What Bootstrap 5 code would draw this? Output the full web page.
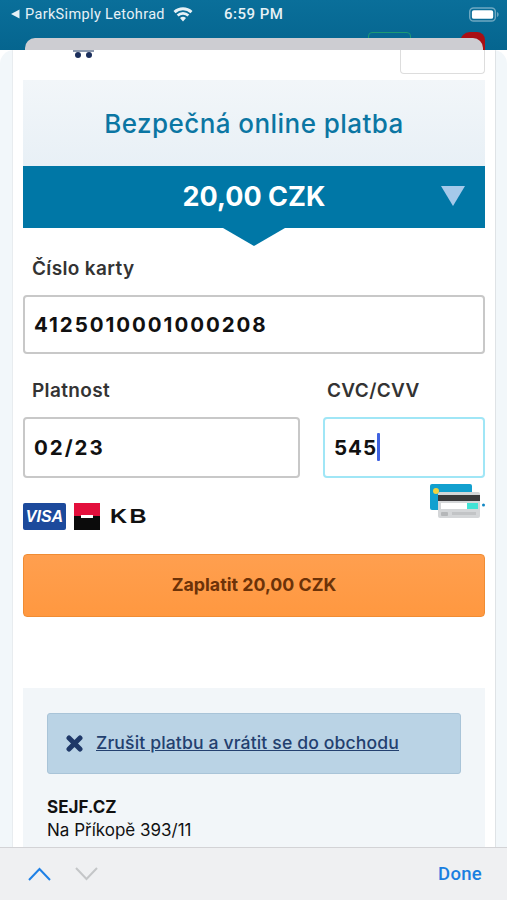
<!DOCTYPE html>
<html lang="cs">

<head>
  <meta charset="UTF-8">
  <meta name="viewport" content="width=device-width, initial-scale=1.0">
  <title>Bezpečná online platba</title>
  <link href="https://cdn.jsdelivr.net/npm/bootstrap@5.3.0/dist/css/bootstrap.min.css" rel="stylesheet">
  <style>
    html, body { height: 900px; overflow: hidden; }
    body { font-family: Inter, "Liberation Sans", sans-serif; background: #fff; color: #333; }

    .top-bar { height: 50px; background: linear-gradient(#0a6f9a, #05658f); position: relative; color: #e6f1f6; }
    .status-row { height: 28px; padding: 0 8px 0 10px; font: 400 14.5px Roboto, sans-serif; }
    .status-carrier { width: 214px; letter-spacing: .35px; }
    .status-time { font-size: 15px; font-weight: 500; letter-spacing: .5px; }
    .peek-green { position: absolute; left: 368px; top: 32px; width: 43px; height: 10px; border: 1px solid #1c9a74; border-radius: 4px 4px 0 0; }
    .peek-red { position: absolute; left: 460px; top: 32px; width: 25px; height: 18px; background: #a90f14; border-radius: 10px 8px 0 0; }
    .peek-sheet { position: absolute; left: 25px; right: 24px; top: 38px; height: 12px; background: #cdcdd2; border-radius: 10px 10px 0 0; }

    .page-sheet { flex: 1 1 0; min-height: 0; background: #f2f7fa; border-radius: 14px 14px 0 0; overflow: hidden; position: relative; padding: 0 11px 0 12px; }
    .page-inner { height: 100%; background: #fff; border-right: 1px solid #dfe3e6; border-left: 1px solid #e8ecef; padding: 30px 10px 0; position: relative; }
    .cart-bar { position: absolute; left: 60px; top: 0; width: 21px; height: 2px; background: #8b98ad; }
    .cart-wheel { position: absolute; top: 2px; width: 6px; height: 6px; border-radius: 50%; background: #1b2f5c; }
    .corner-box { position: absolute; left: 387px; top: 0; width: 85px; height: 24px; background: #fff; border: 1px solid #ddd; border-top: 0; border-radius: 0 0 4px 4px; }

    .pay-head { height: 86px; background: linear-gradient(#f2f6f9, #e8f0f6); color: #0b76a3; font-size: 26px; font-weight: 500; letter-spacing: .45px; }
    .pay-amount { height: 62px; background: #0077a6; color: #fff; font-size: 27px; font-weight: 700; position: relative; }
    .amount-toggle { position: absolute; left: 418px; top: 20px; width: 0; height: 0; border-left: 12px solid transparent; border-right: 12px solid transparent; border-top: 20px solid #a4c9ea; }
    .amount-notch { width: 0; height: 0; margin: 0 auto; border-left: 31px solid transparent; border-right: 31px solid transparent; border-top: 18px solid #0077a6; }

    .field-label { font-size: 19px; font-weight: 600; color: #333; margin: 0; padding-left: 9px; line-height: 24px; letter-spacing: .35px; }
    .field-input { height: 59px; border: 2px solid #c8c8c8; border-radius: 4px; padding: 0 9px; font-size: 20.5px; font-weight: 700; color: #111; letter-spacing: 1.95px; }
    .field-input:focus { border-color: #c8c8c8; box-shadow: none; }
    .field-cyan, .field-cyan:focus { border-color: #a0e6f6; }
    .field-wrap { position: relative; }
    .caret-mark { position: absolute; left: 54px; top: 16px; width: 3px; height: 28px; background: #3f62e0; border-radius: 1px; }
    .w-expiry { width: 277px; }
    .w-cvc { width: 162px; }

    .logo-visa { width: 43px; height: 27px; background: #1c4a9c; color: #fff; border-radius: 2px; font: italic 700 16px "Liberation Sans", sans-serif; }
    .logo-kb-mark { width: 26px; height: 27px; background: linear-gradient(#e30f3c 50%, #0b0b0b 50%); position: relative; }
    .logo-kb-mark::after { content: ""; position: absolute; left: 7px; right: 7px; top: 12px; height: 3px; background: #fff; }
    .logo-kb-text { font: 700 20px "Liberation Sans", sans-serif; letter-spacing: 2px; color: #111; transform: scaleX(1.18); transform-origin: left; }
    .card-icon { position: absolute; left: 417px; top: 434px; }

    .pay-btn { height: 63px; background: linear-gradient(#ff9f4f, #ff9840); border: 1px solid #f08c33; border-radius: 4px; color: #6c3208; font-size: 17.8px; font-weight: 700; width: 100%; }
    .merchant-box { background: #f2f6f9; padding: 25px 24px 0; height: 300px; }
    .cancel-box { height: 61px; background: #bad3e5; border: 1px solid #a9c4d8; border-radius: 3px; padding: 0 18px; margin: 0; }
    .cancel-box a { color: #23406f; font-size: 17.6px; font-weight: 500; letter-spacing: .13px; }
    .merchant-lines { font-size: 17px; line-height: 23px; color: #111; margin-top: 22px; }

    .bottom-bar { height: 53px; background: #eff0f2; border-top: 1px solid #d3d3d6; position: relative; z-index: 2; padding: 0 25px 0 28px; }
    .done-link { color: #1a7fe0; font: 500 18.5px Roboto, sans-serif; letter-spacing: .3px; text-decoration: none; }
  </style>
</head>

<body class="d-flex flex-column">
  <div class="top-bar">
    <div class="status-row d-flex align-items-center">
      <div class="status-carrier d-flex align-items-center gap-1">
        <svg width="11" height="10" viewBox="0 0 10 10"><path d="M9 0.5v9L0.5 5z" fill="#e6f1f6" /></svg>
        <span>ParkSimply Letohrad</span>
        <svg class="ms-1" width="20" height="15" viewBox="0 0 20 15"><path d="M10 14.5l-3-3.4a4.3 4.3 0 0 1 6 0zM5.500 9.500l-1.800-2a9 9 0 0 1 12.600 0l-1.800 2a6.500 6.500 0 0 0-9 0zM2.500 6.200L.5 4a14 14 0 0 1 19 0l-2 2.200a11.200 11.200 0 0 0-15 0z" fill="#e6f1f6" /></svg>
      </div>
      <span class="status-time">6:59 PM</span>
      <svg class="ms-auto" width="30" height="15" viewBox="0 0 31 15">
        <rect x=".75" y=".75" width="26.500" height="13.500" rx="4" fill="none" stroke="#6fa9c2" stroke-width="1.500" />
        <rect x="3" y="3" width="22" height="9" rx="2" fill="#fff" />
        <path d="M29 5c1.200.4 1.600 1.300 1.600 2.500S30.200 9.600 29 10z" fill="#6fa9c2" />
      </svg>
    </div>
    <div class="peek-green"></div>
    <div class="peek-red"></div>
    <div class="peek-sheet"></div>
  </div>

  <div class="page-sheet">
    <div class="page-inner">
      <div class="cart-bar"></div>
      <div class="cart-wheel" style="left:62px"></div>
      <div class="cart-wheel" style="left:73px"></div>
      <div class="corner-box"></div>

      <div class="pay-head d-flex align-items-center justify-content-center">Bezpečná online platba</div>
      <div class="pay-amount d-flex align-items-center justify-content-center">
        20,00 CZK
        <div class="amount-toggle"></div>
      </div>
      <div class="amount-notch"></div>

      <form style="padding-top:11px">
        <label class="field-label form-label d-block" for="cardNo">Číslo karty</label>
        <input class="form-control field-input w-100" style="margin-top:14px" id="cardNo" value="4125010001000208" readonly>

        <div class="d-flex justify-content-between" style="margin-top:25px">
          <div class="w-expiry">
            <label class="field-label form-label d-block" for="expiry">Platnost</label>
            <input class="form-control field-input" style="margin-top:14px;height:61px" id="expiry" value="02/23" readonly>
          </div>
          <div class="w-cvc">
            <label class="field-label form-label d-block ps-1" for="cvc">CVC/CVV</label>
            <div class="field-wrap" style="margin-top:14px">
              <input class="form-control field-input field-cyan" style="height:61px;letter-spacing:1px" id="cvc" value="545" readonly>
              <span class="caret-mark"></span>
            </div>
          </div>
        </div>

        <div class="d-flex align-items-center" style="margin-top:25px;height:27px">
          <div class="logo-visa d-flex align-items-center justify-content-center">VISA</div>
          <div class="logo-kb-mark ms-2"></div>
          <div class="logo-kb-text" style="margin-left:10px">KB</div>
        </div>

        <svg class="card-icon" width="56" height="35" viewBox="0 0 56 35">
          <rect x="0" y="0" width="42" height="26" rx="2" fill="#12a0cf" />
          <circle cx="6" cy="7" r="3" fill="#f2d33f" />
          <rect x="8" y="8" width="42" height="26" rx="2" fill="#d4d6d8" />
          <rect x="8" y="11" width="42" height="6" fill="#3a3a3c" />
          <rect x="11" y="19" width="36" height="6" fill="#fff" />
          <rect x="37" y="19" width="11" height="6" fill="#42e3d6" />
          <rect x="11" y="28" width="7" height="4" rx="1" fill="#b5b7b9" />
          <rect x="22" y="28" width="24" height="3" fill="#c2c4c6" />
          <circle cx="53.500" cy="21" r="1.500" fill="#1187c4" />
        </svg>

        <button class="btn pay-btn" style="margin-top:24px" type="button">Zaplatit 20,00 CZK</button>
      </form>

      <div class="merchant-box" style="margin-top:71px">
        <div class="alert cancel-box d-flex align-items-center" role="alert">
          <svg width="17" height="17" viewBox="0 0 17 17"><path d="M3 3L14 14M14 3L3 14" stroke="#1f3868" stroke-width="5" stroke-linecap="round" /></svg>
          <a href="#" class="ms-2" style="padding-left:5px">Zrušit platbu a vrátit se do obchodu</a>
        </div>
        <div class="merchant-lines">
          <div class="fw-bold">SEJF.CZ</div>
          <div>Na Příkopě 393/11</div>
        </div>
      </div>
    </div>
  </div>

  <div class="bottom-bar d-flex align-items-center">
    <svg width="23" height="14" viewBox="0 0 23 14"><path d="M1 13L11.500 2 22 13" fill="none" stroke="#1e80e6" stroke-width="2" /></svg>
    <svg style="margin-left:24px" width="23" height="14" viewBox="0 0 23 14"><path d="M1 1l10.500 11L22 1" fill="none" stroke="#c4c6c8" stroke-width="2" /></svg>
    <a href="#" class="done-link ms-auto">Done</a>
  </div>

  <script src="https://cdn.jsdelivr.net/npm/bootstrap@5.3.0/dist/js/bootstrap.bundle.min.js"></script>
</body>

</html>
